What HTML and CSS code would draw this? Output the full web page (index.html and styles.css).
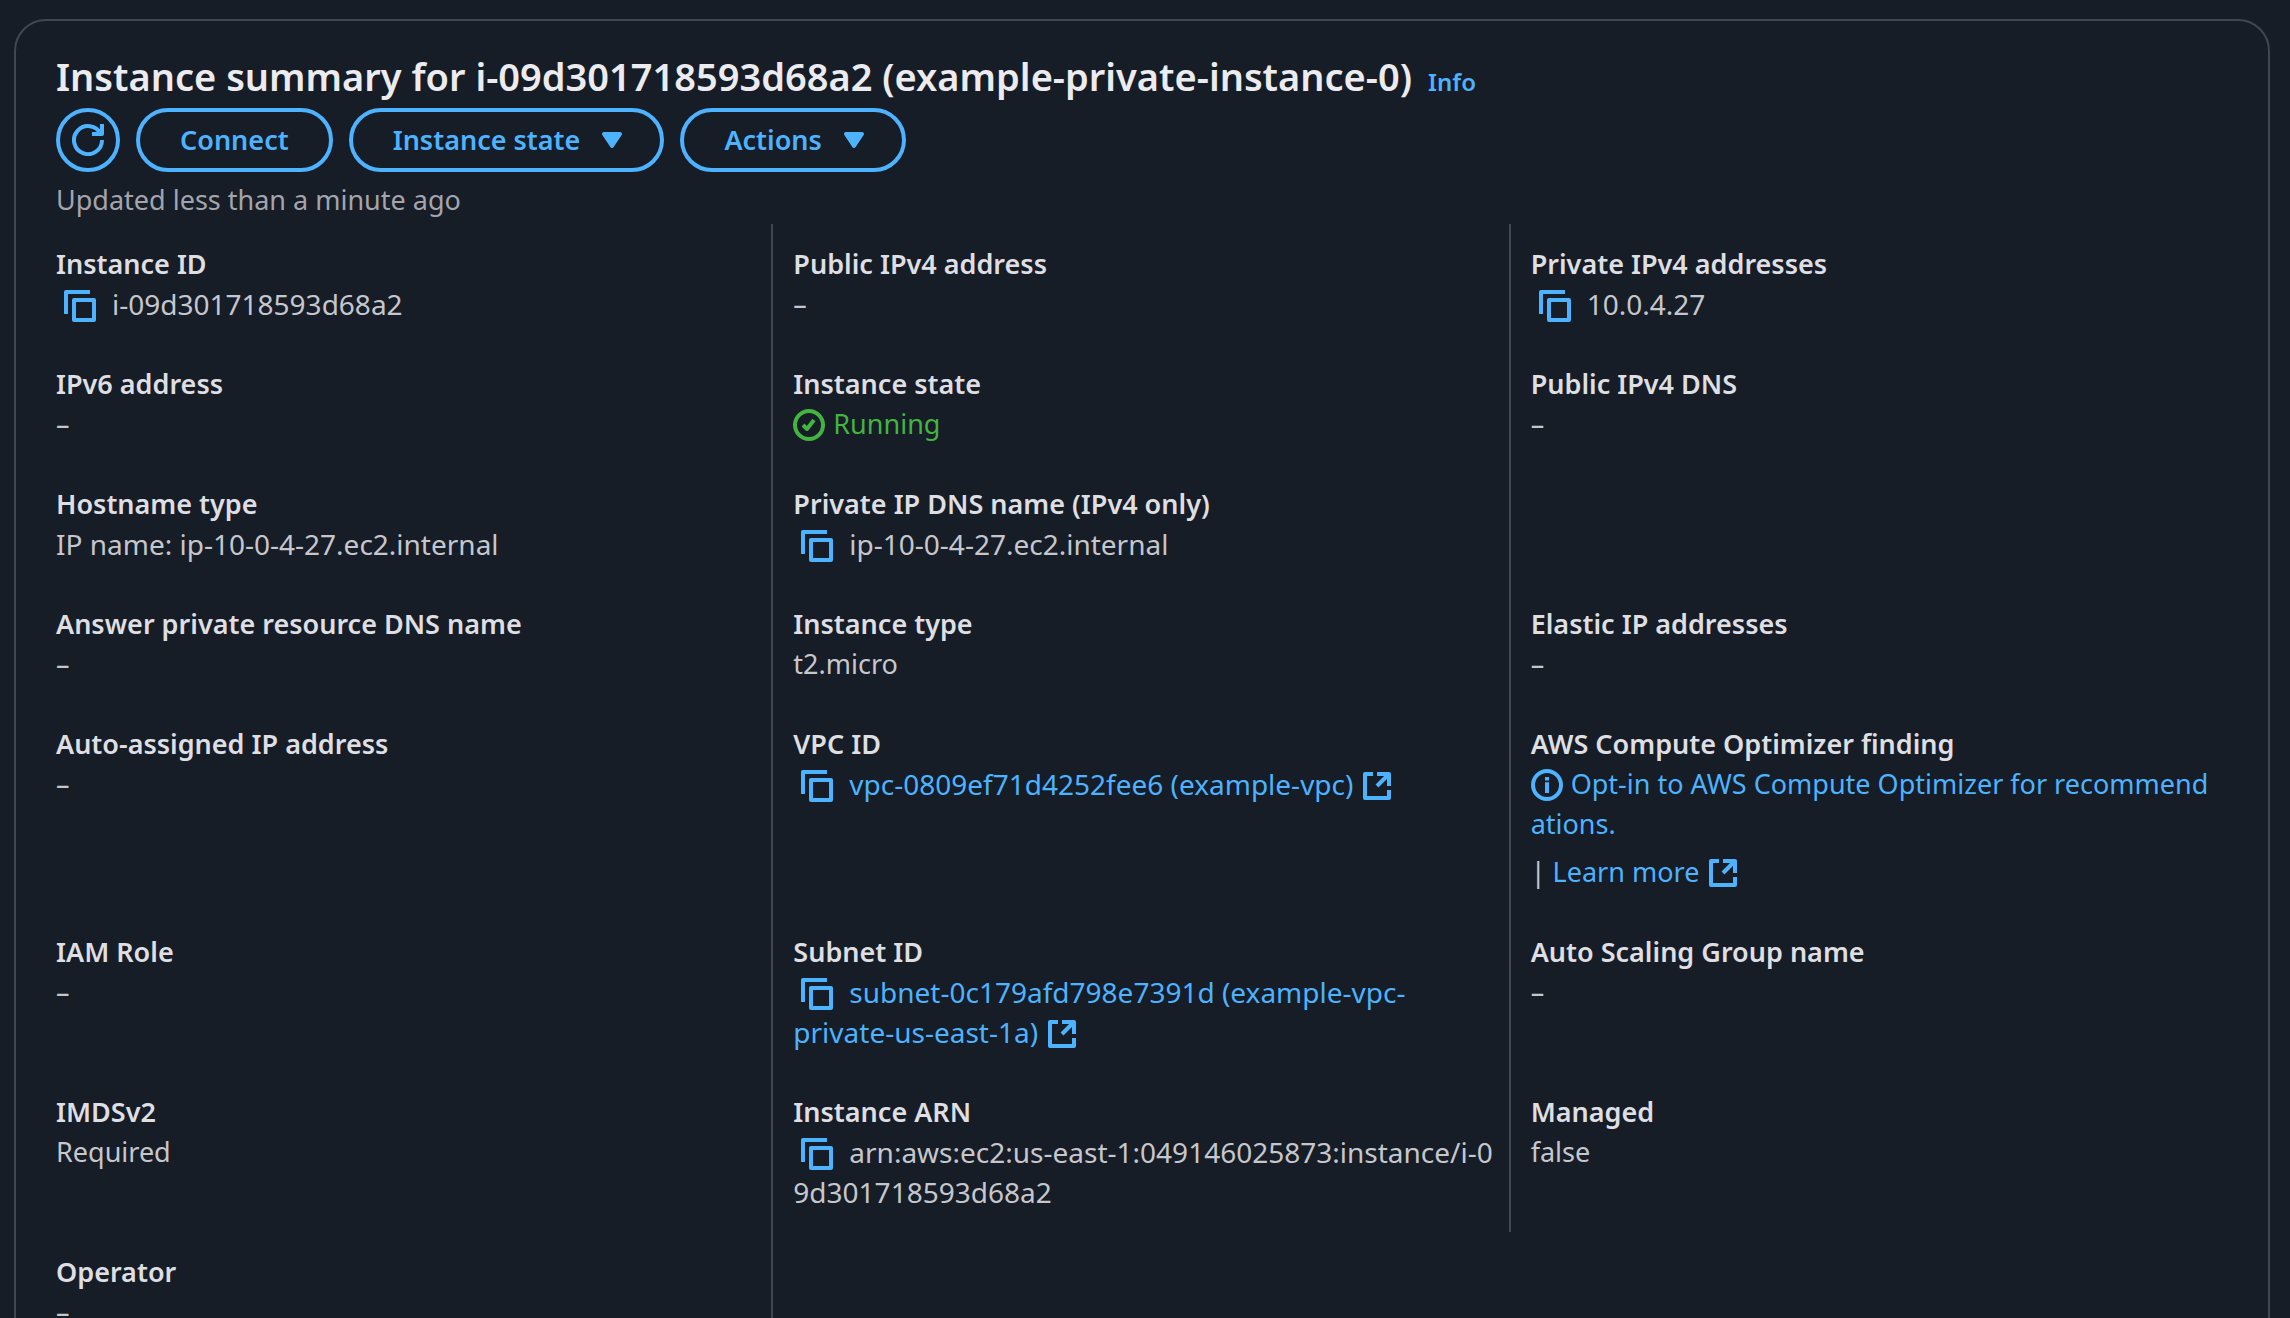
FILE: index.html
```html
<!DOCTYPE html>
<html lang="en">
<head>
<meta charset="utf-8">
<title>Instance summary</title>
<link rel="stylesheet" href="styles.css">
</head>
<body>
<svg class="sprite" aria-hidden="true">
  <symbol id="copy" viewBox="0 0 16 16"><path d="M15 5H5v10h10V5Z"/><path d="M13 1H1v11"/></symbol>
  <symbol id="external" viewBox="0 0 16 16"><path d="M8 2h6v6"/><path d="m8 8 6-6"/><path d="M14 10v4H2V2h4"/></symbol>
  <symbol id="check" viewBox="0 0 16 16"><circle cx="8" cy="8" r="7"/><path d="m5 8 2 2 3.5-4.5"/></symbol>
  <symbol id="info-icon" viewBox="0 0 16 16"><circle cx="8" cy="8" r="7"/><path d="M8 12V6.6M8 5.8V4"/></symbol>
  <symbol id="refresh" viewBox="0 0 16 16"><path d="M10 5h5V0"/><path d="M15 8a7 7 0 1 1-.7-3"/></symbol>
  <symbol id="caret" viewBox="0 0 16 16"><path class="solid" d="M4 5h8l-4 6-4-6z"/></symbol>
</svg>
<main class="card">
  <header class="card-header">
    <div class="title-row">
      <h1 class="title">Instance summary for i-09d301718593d68a2 (example-private-instance-0)</h1>
      <a class="info-link" href="#info">Info</a>
    </div>
    <div class="actions">
      <button class="btn btn-icon" type="button" aria-label="Refresh"><svg class="icon"><use href="#refresh"/></svg></button>
      <button class="btn" type="button">Connect</button>
      <button class="btn btn-menu" type="button">Instance state<svg class="icon"><use href="#caret"/></svg></button>
      <button class="btn btn-menu" type="button">Actions<svg class="icon"><use href="#caret"/></svg></button>
    </div>
    <p class="updated">Updated less than a minute ago</p>
  </header>
  <dl class="details">
    <div class="cell"><dt>Instance ID</dt><dd class="ident break"><button class="copy" type="button" aria-label="Copy instance ID"><svg class="icon"><use href="#copy"/></svg></button>i-09d301718593d68a2</dd></div>
    <div class="cell"><dt>Public IPv4 address</dt><dd>–</dd></div>
    <div class="cell"><dt>Private IPv4 addresses</dt><dd class="ident"><button class="copy" type="button" aria-label="Copy private IPv4 address"><svg class="icon"><use href="#copy"/></svg></button>10.0.4.27</dd></div>

    <div class="cell"><dt>IPv6 address</dt><dd>–</dd></div>
    <div class="cell"><dt>Instance state</dt><dd class="running"><svg class="icon status"><use href="#check"/></svg>Running</dd></div>
    <div class="cell"><dt>Public IPv4 DNS</dt><dd>–</dd></div>

    <div class="cell"><dt>Hostname type</dt><dd class="ident">IP name: ip-10-0-4-27.ec2.internal</dd></div>
    <div class="cell"><dt>Private IP DNS name (IPv4 only)</dt><dd class="ident"><button class="copy" type="button" aria-label="Copy private IP DNS name"><svg class="icon"><use href="#copy"/></svg></button>ip-10-0-4-27.ec2.internal</dd></div>
    <div class="cell"></div>

    <div class="cell"><dt>Answer private resource DNS name</dt><dd>–</dd></div>
    <div class="cell"><dt>Instance type</dt><dd>t2.micro</dd></div>
    <div class="cell"><dt>Elastic IP addresses</dt><dd>–</dd></div>

    <div class="cell"><dt>Auto-assigned IP address</dt><dd>–</dd></div>
    <div class="cell"><dt>VPC ID</dt><dd class="ident"><button class="copy" type="button" aria-label="Copy VPC ID"><svg class="icon"><use href="#copy"/></svg></button><a href="#vpc">vpc-0809ef71d4252fee6 (example-vpc)<svg class="icon external"><use href="#external"/></svg></a></dd></div>
    <div class="cell"><dt>AWS Compute Optimizer finding</dt><dd><div><a href="#optimizer"><svg class="icon status"><use href="#info-icon"/></svg>Opt-in to AWS Compute Optimizer for recommend<wbr>ations.</a></div><div class="learn">| <a href="#learn">Learn more<svg class="icon external"><use href="#external"/></svg></a></div></dd></div>

    <div class="cell"><dt>IAM Role</dt><dd>–</dd></div>
    <div class="cell"><dt>Subnet ID</dt><dd class="ident"><button class="copy" type="button" aria-label="Copy subnet ID"><svg class="icon"><use href="#copy"/></svg></button><a href="#subnet">subnet-0c179afd798e7391d (example-vpc-private-us-east-1a)<svg class="icon external"><use href="#external"/></svg></a></dd></div>
    <div class="cell"><dt>Auto Scaling Group name</dt><dd>–</dd></div>

    <div class="cell"><dt>IMDSv2</dt><dd>Required</dd></div>
    <div class="cell"><dt>Instance ARN</dt><dd class="ident break"><button class="copy" type="button" aria-label="Copy instance ARN"><svg class="icon"><use href="#copy"/></svg></button>arn:aws:ec2:us-east-1:049146025873:instance/i-09d301718593d68a2</dd></div>
    <div class="cell"><dt>Managed</dt><dd>false</dd></div>

    <div class="cell"><dt>Operator</dt><dd>–</dd></div>
  </dl>
</main>
</body>
</html>
```
FILE: styles.css
```css
* { box-sizing: border-box; }
html { background: #161d26; overflow: hidden; }
body {
  margin: 0;
  padding: 19px 20px 0 14px;
  color: #c6c6cd;
  font-family: "Noto Sans", "Open Sans", sans-serif;
  font-size: 27px;
  line-height: 40px;
}
.sprite { display: none; }
.card {
  border: 2px solid #424650;
  border-radius: 32px;
  padding: 31px 20px;
}
.card-header { padding: 0 20px; }
.title-row { display: flex; align-items: baseline; gap: 16px; }
.title {
  margin: 0;
  color: #ebebf0;
  font-size: 38px;
  line-height: 48px;
  font-weight: 600;
}
a { color: #4db2ff; text-decoration: none; }
.info-link { font-size: 24px; line-height: 32px; font-weight: 600; }
.actions { display: flex; gap: 16px; margin-top: 8px; }
.btn {
  display: flex;
  align-items: center;
  gap: 16px;
  height: 64px;
  padding: 0 40px;
  border: 4px solid #4db2ff;
  border-radius: 32px;
  background: transparent;
  color: #4db2ff;
  font: inherit;
  font-weight: 600;
  cursor: pointer;
}
.btn-icon { width: 64px; padding: 0; justify-content: center; }
.btn-menu { padding-right: 32px; }
.icon {
  width: 32px;
  height: 32px;
  fill: none;
  stroke: currentColor;
  stroke-width: 2;
  stroke-linejoin: round;
  flex: none;
}
.solid { fill: currentColor; }
.updated { margin: 8px 0 4px; color: #a4a4ad; }
.details {
  display: grid;
  grid-template-columns: repeat(3, minmax(0, 1fr));
  margin: 0;
}
.cell { padding: 20px 8px 20px 20px; border-right: 2px solid #424650; }
.cell:nth-child(3n) { border-right-color: transparent; }
dt { color: #dedee3; font-weight: 600; }
dd { margin: 0; }
.ident { font-size: 28px; }
.break { word-break: break-all; }
dd .icon { vertical-align: middle; margin-top: -6px; margin-bottom: -2px; }
.copy {
  padding: 0;
  margin: 0 16px 0 8px;
  border: 0;
  background: none;
  color: #4db2ff;
  font: inherit;
  line-height: 32px;
  cursor: pointer;
}
dd .status { margin-right: 8px; }
dd .external { margin-left: 8px; }
.running { color: #43b341; }
.learn { margin-top: 8px; }
```
